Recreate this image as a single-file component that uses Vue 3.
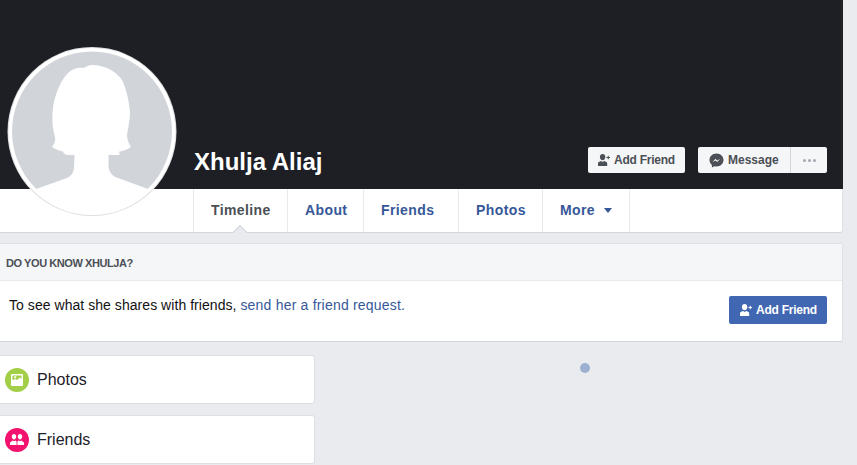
<script setup>
const tabs = [
  { label: "Timeline", active: true },
  { label: "About" },
  { label: "Friends" },
  { label: "Photos" },
  { label: "More", caret: true },
];
</script>

<template>
  <div class="page">
    <div class="profile">
      <div class="cover">
        <h1 class="name">Xhulja Aliaj</h1>
        <div class="actions">
          <button class="btn btn-add">
            <svg class="btn-icon" viewBox="0 0 12 12">
              <path d="M4.600 0C6.200 0 7.300 1.200 7.300 3S6.200 6.200 4.600 6.200 1.900 4.800 1.900 3 3 0 4.600 0z" fill="currentColor" />
              <path d="M0 12V9.300C0 8.200 1.200 7.600 3 7.100L4.600 8 6.200 7.100C8 7.600 9.200 8.200 9.200 9.300V12z" fill="currentColor" />
              <path d="M8.500 3.500h3.500M10.250 1.750v3.500" stroke="currentColor" stroke-width="1" />
            </svg>
            <span class="add-label">Add Friend</span>
          </button>
          <div class="btn-group">
            <button class="btn btn-msg">
              <svg class="btn-icon msg" viewBox="0 0 15 15">
                <path d="M7.500 0.500C3.500 0.500 0.500 3.400 0.500 7c0 2 1 3.700 2.400 4.900v2.600l2.400-1.300c.7.2 1.400.3 2.200.3 4 0 7-2.900 7-6.500S11.500.5 7.500.5z" fill="currentColor" />
                <path d="M3.500 9l3-3.200 1.700 1.600 3-1.600-3 3.200-1.700-1.600z" fill="#f5f6f7" />
              </svg>
              Message
            </button>
            <button class="btn btn-more">
              <span class="dot"></span><span class="dot"></span><span class="dot"></span>
            </button>
          </div>
        </div>
      </div>
      <nav class="tabs">
        <a v-for="tab in tabs" :key="tab.label" class="tab" :class="{ active: tab.active }">
          {{ tab.label }}
          <span v-if="tab.caret" class="caret"></span>
        </a>
      </nav>
      <svg class="avatar" viewBox="7 46 170 171">
        <circle cx="92" cy="131.500" r="84.500" fill="#dddfe2" />
        <circle cx="92" cy="131.500" r="83.500" fill="#fff" />
        <circle cx="92" cy="131.500" r="80" fill="#d1d5da" />
        <path
          d="M93 65C88 65 86 67 84 68C78 67 72 69 68 73C62 79 58 88 55 98C52 108 52 120 53 128C54 134 56 138 55 141C54 144 53 146 52 147C55 149 60 151 64 152L63 153L67 155H74.500L74 168C73.500 173 71 176 67 178L36 189C50 205 70 213.500 92 213.500C114 213.500 134 205 148 189L118 178C112 176 109 172 108.500 166V155H119L120 153L118 152C124 151 128 149 131 147C129 144 127 140 127 135C128 128 130 120 130 112C129 100 126 88 122 80C116 72 108 66 93 65Z"
          fill="#fff"
        />
      </svg>
    </div>

    <section class="card know">
      <h2 class="know-title">DO YOU KNOW XHULJA?</h2>
      <div class="know-body">
        <p class="know-text">
          To see what she shares with friends,
          <a class="link">send her a friend request.</a>
        </p>
        <button class="btn btn-add btn-primary">
          <svg class="btn-icon" viewBox="0 0 12 12">
            <path d="M4.600 0C6.200 0 7.300 1.200 7.300 3S6.200 6.200 4.600 6.200 1.900 4.800 1.900 3 3 0 4.600 0z" fill="currentColor" />
            <path d="M0 12V9.300C0 8.200 1.200 7.600 3 7.100L4.600 8 6.200 7.100C8 7.600 9.200 8.200 9.200 9.300V12z" fill="currentColor" />
            <path d="M8.500 3.500h3.500M10.250 1.750v3.500" stroke="currentColor" stroke-width="1" />
          </svg>
          <span class="add-label">Add Friend</span>
        </button>
      </div>
    </section>

    <div class="columns">
      <div class="left">
        <div class="card side">
          <span class="side-icon green">
            <svg viewBox="0 0 12 12" width="12" height="12">
              <path fill-rule="evenodd" d="M1 0h10a1 1 0 0 1 1 1v10a1 1 0 0 1-1 1H1a1 1 0 0 1-1-1V1a1 1 0 0 1 1-1zM1.500 1.500v4.800L4 5l2 1 2.800-2.500L10.500 5V1.500z" fill="#fff" />
              <path d="M3 3.200h2.400M4.200 2v2.400" stroke="#fff" stroke-width="1" />
            </svg>
          </span>
          Photos
        </div>
        <div class="card side">
          <span class="side-icon pink">
            <svg viewBox="0 0 14 11" width="14" height="11">
              <path d="M4 0C5.300 0 6.200 1 6.200 2.600S5.300 5.500 4 5.500 1.800 4.200 1.800 2.600 2.700 0 4 0zM10 0c1.300 0 2.200 1 2.200 2.600S11.300 5.500 10 5.500 7.800 4.200 7.800 2.600 8.700 0 10 0z" fill="#fff" />
              <path d="M0 11V8.500L2.700 6.500 4 7.200 5.300 6.500 6.600 7.500V11zM7.400 11V7.500L8.700 6.500 10 7.200 11.300 6.500 14 8.500V11z" fill="#fff" />
            </svg>
          </span>
          Friends
        </div>
      </div>
      <div class="right">
        <span class="loader"></span>
      </div>
    </div>
  </div>
</template>

<style scoped>
.page {
  width: 843px;
  font-family: "Liberation Sans", Arial, sans-serif;
}

.profile {
  position: relative;
  background: #fff;
  border-right: 1px solid #dddfe2;
  border-bottom: 1px solid #d3d6db;
  border-bottom-right-radius: 3px;
}

.cover {
  height: 189px;
  background: #1d1f25;
  display: flex;
  align-items: flex-end;
  justify-content: space-between;
  padding: 0 16px 16px 193px;
  box-sizing: border-box;
  margin-right: -1px;
}

.name {
  margin: 0 0 -3px 1px;
  color: #fff;
  font-size: 24px;
  line-height: 28px;
  font-weight: bold;
}

.actions {
  display: flex;
  gap: 13px;
}

.btn {
  display: flex;
  align-items: center;
  gap: 4px;
  height: 26px;
  padding: 0 10px;
  border: none;
  border-radius: 2px;
  background: #f5f6f7;
  color: #4b4f56;
  font-family: inherit;
  font-size: 12px;
  font-weight: bold;
  white-space: nowrap;
}

.btn-add {
  width: 97px;
}

.add-label {
  letter-spacing: -0.25px;
}

.btn-icon {
  width: 12px;
  height: 12px;
  flex: none;
}

.btn-icon.msg {
  width: 15px;
  height: 15px;
}

.btn-group {
  display: flex;
}

.btn-msg {
  width: 93px;
  padding: 0 0 0 11px;
  border-radius: 2px 0 0 2px;
  border-right: 1px solid #d3d6db;
}

.btn-more {
  width: 36px;
  padding: 0;
  justify-content: center;
  gap: 2px;
  border-radius: 0 2px 2px 0;
}

.dot {
  width: 3px;
  height: 3px;
  border-radius: 50%;
  background: #a5a8af;
}

.tabs {
  display: grid;
  grid-template-columns: 94px 76px 95px 84px 88px;
  justify-content: start;
  height: 43px;
  padding-left: 193px;
}

.tab {
  position: relative;
  display: flex;
  align-items: center;
  gap: 6px;
  padding-left: 17px;
  padding-bottom: 1px;
  border-left: 1px solid #e9eaed;
  color: #365899;
  font-size: 14px;
  font-weight: bold;
  letter-spacing: 0.4px;
}

.tab:last-child {
  border-right: 1px solid #e9eaed;
}

.tab.active {
  color: #4b4f56;
}

/* little notch under the active tab */
.tab.active::after {
  content: "";
  position: absolute;
  left: 41px;
  bottom: -5px;
  width: 9px;
  height: 9px;
  background: #e9ebee;
  border-top: 1px solid #d3d6db;
  border-left: 1px solid #d3d6db;
  transform: rotate(45deg);
}

.caret {
  width: 0;
  height: 0;
  border-left: 4px solid transparent;
  border-right: 4px solid transparent;
  border-top: 5px solid #365899;
  margin-left: 3px;
  margin-top: 1px;
}

.avatar {
  position: absolute;
  left: 7px;
  top: 46px;
  width: 170px;
  height: 171px;
}

.card {
  background: #fff;
  border: 1px solid #dddfe2;
  border-left: none;
  border-radius: 0 3px 3px 0;
}

.know {
  margin-top: 10px;
  border-bottom-color: #d3d6db;
}

.know-title {
  margin: 0;
  height: 36px;
  padding-left: 6px;
  background: #f5f6f7;
  border-bottom: 1px solid #e9eaed;
  color: #4b4f56;
  font-size: 11px;
  line-height: 38px;
  font-weight: bold;
  letter-spacing: -0.42px;
}

.know-body {
  display: flex;
  justify-content: space-between;
  align-items: flex-start;
  height: 60px;
  padding: 15px 15px 0 9px;
  box-sizing: border-box;
}

.know-text {
  margin: 0;
  color: #111;
  font-size: 14px;
  line-height: 18px;
  letter-spacing: 0.05px;
}

.link {
  color: #365899;
  letter-spacing: 0.2px;
}

.btn-primary {
  height: 28px;
  width: 98px;
  padding-left: 11px;
  background: #4267b2;
  color: #fff;
}

.columns {
  display: flex;
  gap: 12px;
  margin-top: 13px;
}

.left {
  width: 315px;
  display: flex;
  flex-direction: column;
  gap: 11px;
}

.side {
  display: flex;
  align-items: center;
  gap: 8px;
  height: 47px;
  padding-left: 5px;
  color: #1d2129;
  font-size: 16px;
}

.side-icon {
  width: 24px;
  height: 24px;
  border-radius: 50%;
  display: flex;
  align-items: center;
  justify-content: center;
}

.green {
  background: #a3ce47;
}

.pink {
  background: #f3126e;
}

.right {
  flex: 1;
  display: flex;
  justify-content: center;
  padding-top: 8px;
}

.loader {
  width: 10px;
  height: 10px;
  border-radius: 50%;
  background: #9cb0d0;
}
</style>

<style>
html,
body {
  background: #e9ebee;
  overflow: hidden;
}
</style>
